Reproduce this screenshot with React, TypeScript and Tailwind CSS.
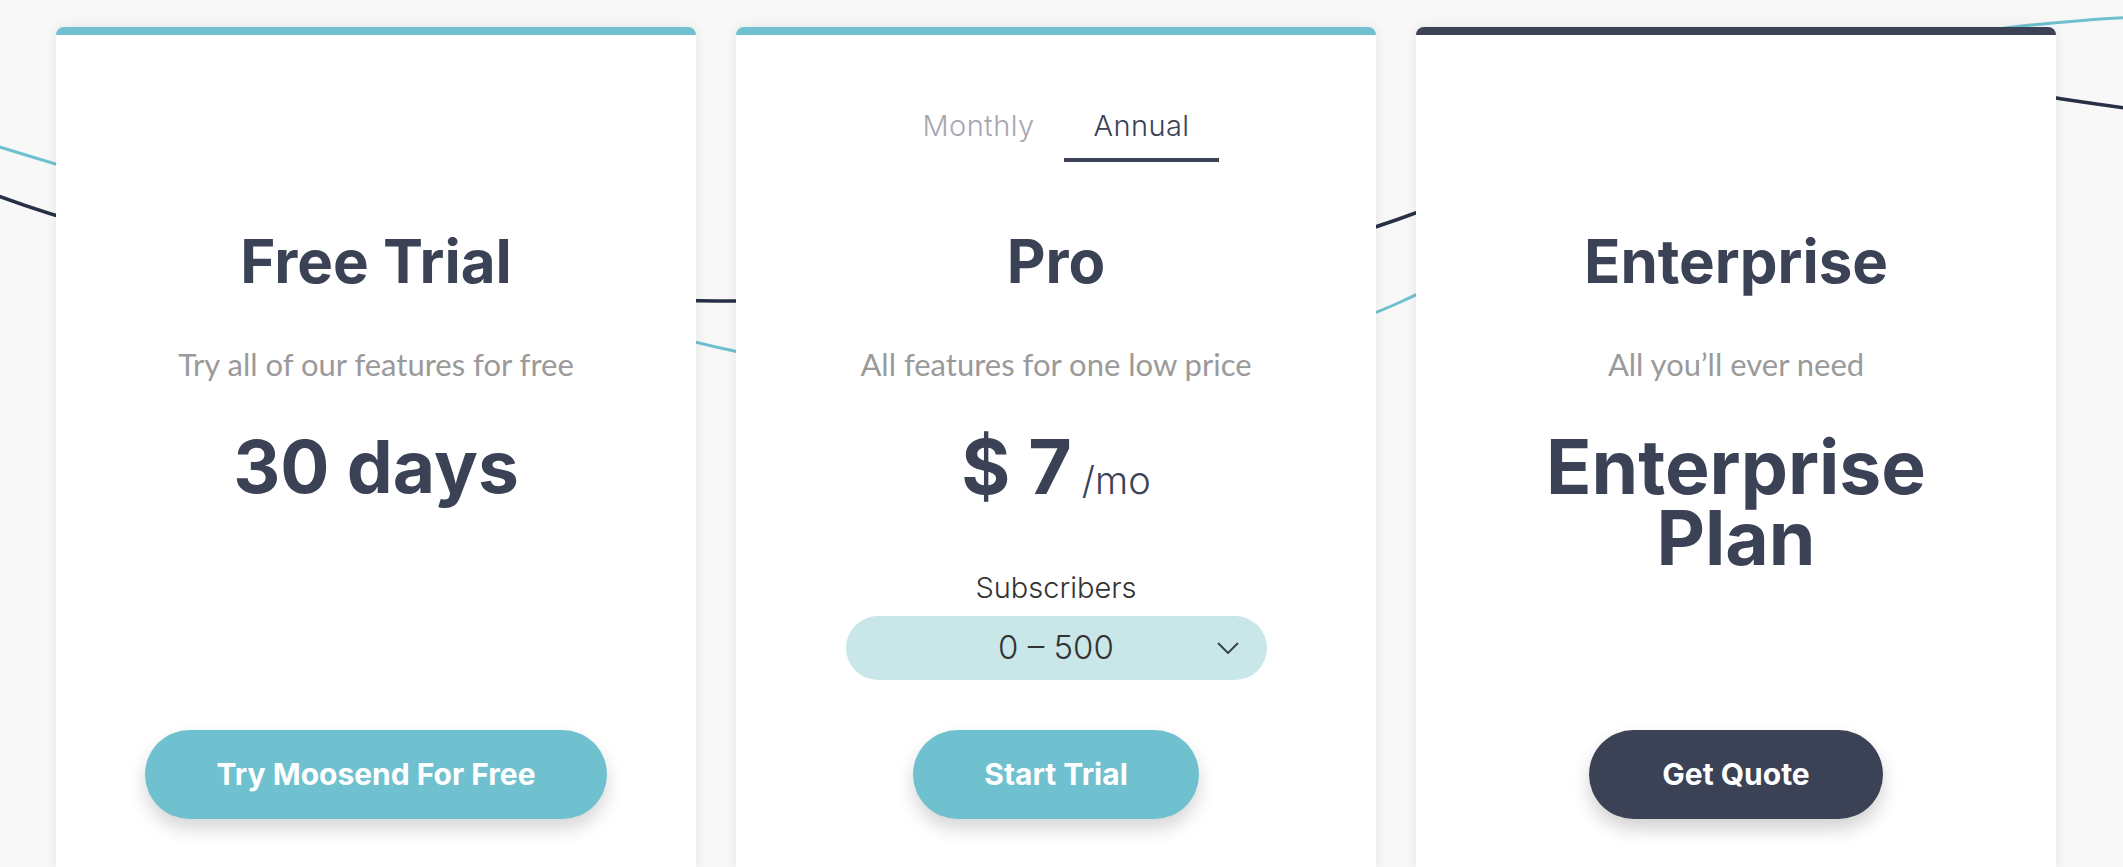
import React, { useState } from "react";

const HEAD = "font-['Inter','Liberation_Sans',sans-serif]";
const BODY = "font-['Lato','Liberation_Sans',sans-serif]";

function Waves() {
  return (
    <svg
      className="absolute top-0 left-0 w-[2123px] h-[867px] pointer-events-none"
      viewBox="0 0 2123 867"
      fill="none"
    >
      <path
        d="M-20 189 C200 275 500 300 716 301 C950 302 1200 290 1396 220 C1600 147 1850 65 2056 98 C2090 103 2110 106 2140 110"
        stroke="#283047"
        strokeWidth="3.5"
      />
      <path
        d="M-20 141 C200 209 560 310 716 347 C880 386 1200 392 1396 304 C1600 212 1850 45 2013 27 C2060 22 2100 18 2140 17"
        stroke="#6fc1cf"
        strokeWidth="3"
      />
    </svg>
  );
}

function Chevron() {
  return (
    <svg width="22" height="12" viewBox="0 0 22 12" fill="none">
      <path d="M1 1 L11 11 L21 1" stroke="#3b4256" strokeWidth="2" />
    </svg>
  );
}

function CardShell({ accent, children }: { accent: string; children: React.ReactNode }) {
  return (
    <div
      className={`w-[640px] bg-white rounded-lg border-t-8 ${accent} shadow-[0_0_14px_rgba(0,0,0,0.08)] flex flex-col items-center text-center pt-[76px] pb-[56px]`}
    >
      {children}
    </div>
  );
}

function Heading({ title, subtitle }: { title: string; subtitle: string }) {
  return (
    <>
      <h2 className={`${HEAD} mt-[69px] text-[60px] leading-none font-bold text-[#3b4256]`}>{title}</h2>
      <p className={`${BODY} mt-[58px] text-[31px] leading-none font-normal text-[#9a9a9a]`}>{subtitle}</p>
    </>
  );
}

export default function App() {
  const [period, setPeriod] = useState<"monthly" | "annual">("annual");

  return (
    <div className="relative min-h-screen bg-[#f8f8f8] overflow-hidden">
      <Waves />

      <div className="relative z-10 flex gap-10 pl-[56px] pt-[27px]">
        {/* Free Trial */}
        <CardShell accent="border-[#70c1cf]">
          <div className="h-[51px]" />
          <Heading title="Free Trial" subtitle="Try all of our features for free" />
          <div className={`${HEAD} mt-[51px] text-[73px] leading-[71px] font-bold text-[#3b4256]`}>30 days</div>
          <button
            className={`${HEAD} mt-auto w-[462px] h-[89px] rounded-full bg-[#70c1cf] text-white text-[30px] font-bold shadow-[0_10px_18px_rgba(0,0,0,0.16)]`}
          >
            Try Moosend For Free
          </button>
        </CardShell>

        {/* Pro */}
        <CardShell accent="border-[#70c1cf]">
          <div className="flex gap-2 ml-[8px] h-[51px]">
            {(["monthly", "annual"] as const).map((p) => (
              <button
                key={p}
                onClick={() => setPeriod(p)}
                className={`${HEAD} w-[155px] text-[29px] leading-none font-light tracking-[0.4px] pb-[19px] border-b-4 ${
                  period === p ? "border-[#3b4256] text-[#3b4256]" : "border-transparent text-[#a5a8b1]"
                }`}
              >
                {p === "monthly" ? "Monthly" : "Annual"}
              </button>
            ))}
          </div>
          <Heading title="Pro" subtitle="All features for one low price" />
          <div className={`${HEAD} mt-[51px] h-[71px] leading-[71px] text-[#3b4256]`}>
            <span className="text-[75px] font-bold">$ 7</span>
            <span className="text-[38px] leading-none font-light ml-[10px]">/mo</span>
          </div>
          <div className={`${HEAD} mt-[71px] text-[29px] leading-none font-light text-[#333]`}>Subscribers</div>
          <div className="relative mt-[14px] w-[421px] h-[64px] rounded-full bg-[#c9e7e8] flex items-center justify-center">
            <span className={`${HEAD} text-[33px] font-light text-[#333]`}>0 – 500</span>
            <span className="absolute right-[28px] top-[26px] flex">
              <Chevron />
            </span>
          </div>
          <button
            className={`${HEAD} mt-[50px] w-[286px] h-[89px] rounded-full bg-[#70c1cf] text-white text-[30px] font-bold shadow-[0_10px_18px_rgba(0,0,0,0.16)]`}
          >
            Start Trial
          </button>
        </CardShell>

        {/* Enterprise */}
        <CardShell accent="border-[#3b4256]">
          <div className="h-[51px]" />
          <Heading title="Enterprise" subtitle="All you’ll ever need" />
          <div className={`${HEAD} mt-[51px] text-[75px] leading-[71px] font-bold text-[#3b4256]`}>
            Enterprise
            <br />
            Plan
          </div>
          <button
            className={`${HEAD} mt-auto w-[294px] h-[89px] rounded-full bg-[#3b4256] text-white text-[30px] font-bold shadow-[0_10px_18px_rgba(0,0,0,0.18)]`}
          >
            Get Quote
          </button>
        </CardShell>
      </div>
    </div>
  );
}
